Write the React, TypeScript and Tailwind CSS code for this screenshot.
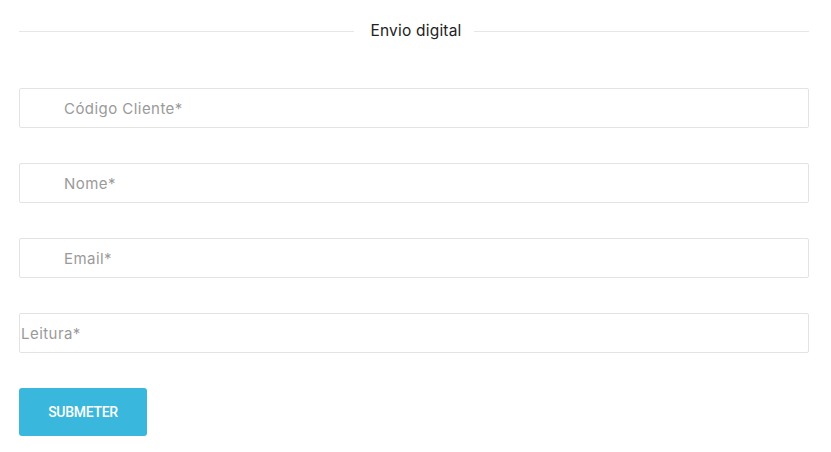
import React from 'react';

// Fields of the form
const FIELDS: { name: string; placeholder: string; indent: boolean }[] = [
  { name: 'codigo', placeholder: 'Código Cliente*', indent: true },
  { name: 'nome', placeholder: 'Nome*', indent: true },
  { name: 'email', placeholder: 'Email*', indent: true },
  { name: 'leitura', placeholder: 'Leitura*', indent: false }
];

const FONT = { fontFamily: 'Inter, "Noto Sans", sans-serif' };

export default function App() {
  return (
    <div className="w-[831px] h-[452px] bg-white pl-[19px] pt-[20px]" style={FONT}>
      <div className="w-[790px] flex items-center h-[22px]">
        <div className="flex-1 h-px bg-[#e6e6e6]" />
        <span className="pl-[16px] pr-[12px] text-[15.5px] text-[#222] tracking-[0.2px]">Envio digital</span>
        <div className="flex-1 h-px bg-[#e6e6e6]" />
      </div>

      <form className="mt-[46px] flex flex-col gap-[35px]" onSubmit={(e) => e.preventDefault()}>
        {FIELDS.map((f) => (
          <input
            key={f.name}
            name={f.name}
            placeholder={f.placeholder}
            className={`h-[40px] w-[790px] border border-[#e3e3e3] rounded-[2px] text-[15px] tracking-[0.45px] text-[#555] placeholder:text-[#9a9a9a] outline-none ${
              f.indent ? 'pl-[44px]' : 'pl-[1px]'
            }`}
          />
        ))}
        <button
          type="submit"
          className="w-[128px] h-[48px] bg-[#3ab7dc] rounded-[3px] text-white text-[14px] font-medium uppercase tracking-[-0.3px]"
          style={{ fontFamily: 'Roboto, sans-serif' }}
        >
          Submeter
        </button>
      </form>
    </div>
  );
}
